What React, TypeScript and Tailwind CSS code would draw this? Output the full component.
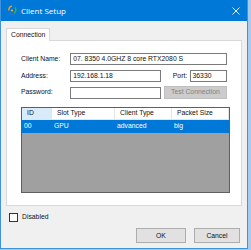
import React from "react";

const FONT = { fontFamily: '"Liberation Sans", Arial, sans-serif' };

function AppIcon() {
  return (
    <svg width="10" height="11" viewBox="0 0 20 22" className="shrink-0">
      <path d="M10 2 C5 3 3 7 4 11" stroke="#e8a020" strokeWidth="3" fill="none" />
      <path d="M16 5 C19 9 18 14 14 17" stroke="#3cb043" strokeWidth="3" fill="none" />
      <path d="M4 15 C6 19 11 21 15 19" stroke="#2f6fd0" strokeWidth="3" fill="none" />
      <path d="M9 7 L12 12 L8 15" stroke="#c0392b" strokeWidth="2" fill="none" />
      <circle cx="10" cy="11" r="2" fill="#f0c030" />
    </svg>
  );
}

function TextBox({ value, className }: { value?: string; className: string }) {
  return (
    <div className={`h-[12px] overflow-hidden whitespace-nowrap border border-[#7a7a7a] bg-white pl-[2px] leading-[10px] text-[#111] ${className}`}>
      {value}
    </div>
  );
}

const columns = [
  { label: "ID", w: "w-[30px]", cell: "00", hl: true },
  { label: "Slot Type", w: "w-[63px]", cell: "GPU" },
  { label: "Client Type", w: "w-[57px]", cell: "advanced" },
  { label: "Packet Size", w: "flex-1", cell: "big" },
];

export default function App() {
  return (
    <div className="h-[250px] w-[251px] bg-[#a6cbee]" style={FONT}>
      <div className="flex h-[249px] w-[248px] flex-col border-l border-r border-b border-[#3f92de] bg-[#f0f0f0]">
        {/* Title bar */}
        <div className="flex h-[21px] shrink-0 items-center bg-[#0078d7] pl-[6px] pr-[6px] text-white">
          <AppIcon />
          <span className="ml-[4px] text-[8px]" style={{ fontFamily: '"Open Sans", "Liberation Sans", sans-serif' }}>
            Client Setup
          </span>
          <svg width="8" height="8" viewBox="0 0 8 8" className="ml-auto mr-[1px]">
            <path d="M0.5 0.5 L7.5 7.5 M7.5 0.5 L0.5 7.5" stroke="white" strokeWidth="0.9" />
          </svg>
        </div>

        {/* Body */}
        <div className="flex flex-1 flex-col px-[5px] pt-[7px] text-[6.8px] text-[#111]">
          {/* Tab header */}
          <div className="flex h-[12px]">
            <div className="relative z-10 -mb-px flex h-[13px] w-[44px] items-center border border-b-0 border-[#d9d9d9] bg-white pl-[4px]">
              Connection
            </div>
          </div>

          {/* Tab page */}
          <div className="flex h-[166px] flex-col border border-[#d9d9d9] bg-white pl-[14px] pr-[14px] pt-[12px]">
            <div className="flex items-center">
              <span className="w-[50px]">Client Name:</span>
              <TextBox value="07. 8350 4.0GHZ 8 core RTX2080 S" className="w-[159px]" />
            </div>
            <div className="mt-[5px] flex items-center">
              <span className="w-[50px]">Address:</span>
              <TextBox value="192.168.1.18" className="w-[92px]" />
              <span className="ml-[12px] w-[17px]">Port:</span>
              <TextBox value="36330" className="w-[38px]" />
            </div>
            <div className="mt-[4px] flex items-center">
              <span className="w-[50px]">Password:</span>
              <TextBox className="w-[92px]" />
              <div className="ml-[3px] flex h-[13px] w-[64px] items-center justify-center border border-[#bfbfbf] bg-[#cccccc] text-[#838383]">
                Test Connection
              </div>
            </div>

            {/* List view */}
            <div className="mt-[8px] flex h-[86px] w-[209px] flex-col border border-[#5f5f5f] bg-[#a0a0a0]">
              <div className="flex h-[12px] border-b border-[#e5e5e5] bg-white">
                {columns.map((c) => (
                  <div
                    key={c.label}
                    className={`flex items-center border-r border-[#e5e5e5] pl-[5px] ${c.w} ${c.hl ? "bg-[#d9ebf9]" : ""}`}
                  >
                    {c.label}
                  </div>
                ))}
              </div>
              <div className="flex h-[13px] bg-[#0078d7] text-white">
                {columns.map((c) => (
                  <div key={c.label} className={`flex items-center pl-[2px] ${c.w}`}>
                    {c.cell}
                  </div>
                ))}
              </div>
            </div>
          </div>

          {/* Disabled checkbox */}
          <div className="mt-[6px] flex items-center pl-[3px]">
            <div className="h-[9px] w-[9px] border border-[#333333] bg-white" />
            <span className="ml-[4px]">Disabled</span>
          </div>

          {/* Buttons */}
          <div className="mt-[6px] flex justify-end gap-[8px] pr-[2px]">
            <div className="flex h-[15px] w-[50px] items-center justify-center border border-[#adadad] bg-[#e1e1e1]">OK</div>
            <div className="flex h-[15px] w-[46px] items-center justify-center border border-[#adadad] bg-[#e1e1e1]">Cancel</div>
          </div>
        </div>
      </div>
    </div>
  );
}
